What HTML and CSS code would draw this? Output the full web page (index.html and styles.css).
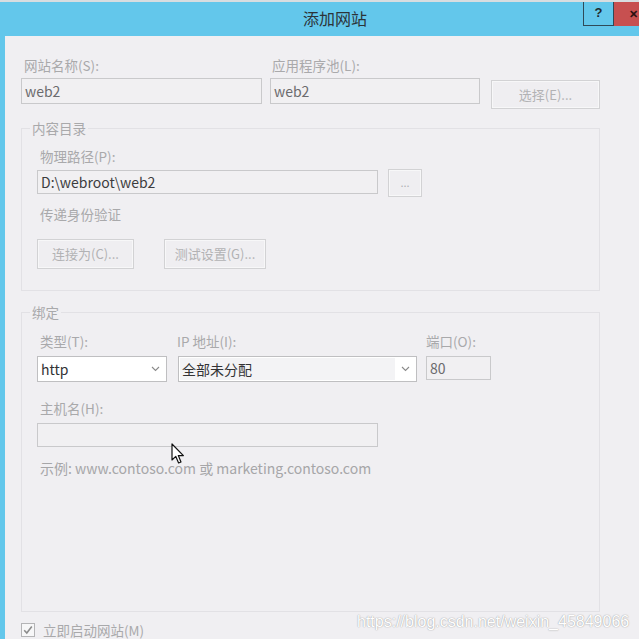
FILE: index.html
```html
<!DOCTYPE html>
<html lang="zh-CN">
<head>
<meta charset="utf-8">
<title>添加网站</title>
<link rel="stylesheet" href="styles.css">
</head>
<body>
<div class="window">
  <div class="titlebar">
    <div class="title">添加网站</div>
    <div class="tb-btn tb-help">?</div>
    <div class="tb-btn tb-close">✕</div>
  </div>
  <div class="panel">
    <div class="top-row">
      <div class="field f-name">
        <div class="lbl">网站名称(S):</div>
        <div class="input ro">web2</div>
      </div>
      <div class="field f-pool">
        <div class="lbl">应用程序池(L):</div>
        <div class="input ro">web2</div>
      </div>
      <div class="btn btn-select">选择(E)...</div>
    </div>

    <fieldset class="group g-content">
      <legend>内容目录</legend>
      <div class="lbl ind">物理路径(P):</div>
      <div class="path-row">
        <div class="input path">D:\webroot\web2</div>
        <div class="btn btn-browse">...</div>
      </div>
      <div class="lbl ind auth">传递身份验证</div>
      <div class="btn-row">
        <div class="btn btn-connect">连接为(C)...</div>
        <div class="btn btn-test">测试设置(G)...</div>
      </div>
    </fieldset>

    <fieldset class="group g-binding">
      <legend>绑定</legend>
      <div class="bind-row">
        <div class="col c-type">
          <div class="lbl ind">类型(T):</div>
          <div class="select">
            <span class="sel-text">http</span>
            <svg class="chev" width="9" height="6" viewBox="0 0 9 6"><path d="M1 1 L4.5 4.5 L8 1" fill="none" stroke="#8a8a8a" stroke-width="1.1"/></svg>
          </div>
        </div>
        <div class="col c-ip">
          <div class="lbl ip-lbl">IP 地址(I):</div>
          <div class="select">
            <span class="sel-text sel-fill">全部未分配</span>
            <svg class="chev" width="9" height="6" viewBox="0 0 9 6"><path d="M1 1 L4.5 4.5 L8 1" fill="none" stroke="#8a8a8a" stroke-width="1.1"/></svg>
          </div>
        </div>
        <div class="col c-port">
          <div class="lbl">端口(O):</div>
          <div class="input ro port">80</div>
        </div>
      </div>
      <div class="lbl ind host-lbl">主机名(H):</div>
      <div class="input ro host"></div>
      <div class="lbl ind example">示例: www.contoso.com 或 marketing.contoso.com</div>
    </fieldset>

    <div class="check-row">
      <span class="checkbox">
        <svg width="12" height="12" viewBox="0 0 12 12"><path d="M2.2 6.2 L4.8 9 L9.8 2.6" fill="none" stroke="#8c8c8c" stroke-width="1.6"/></svg>
      </span>
      <span class="check-lbl">立即启动网站(M)</span>
    </div>
  </div>

  <svg class="cursor" width="14" height="22" viewBox="0 0 14 22"><path d="M1 1 L1 17 L4.8 13.4 L7.6 20 L10 19 L7.3 12.6 L12.4 12.6 Z" fill="#ffffff" stroke="#111111" stroke-width="1.2" stroke-linejoin="round"/></svg>
  <div class="watermark">https://blog.csdn.net/weixin_45849066</div>
</div>
</body>
</html>
```

FILE: styles.css
```css
* { box-sizing: border-box; }

html, body {
  margin: 0;
  padding: 0;
  width: 639px;
  height: 639px;
  overflow: hidden;
  background: #63c7eb;
  font-family: "Noto Sans CJK SC", "Noto Sans", sans-serif;
}

.window {
  position: relative;
  width: 639px;
  height: 639px;
  display: flex;
  flex-direction: column;
}

.titlebar {
  height: 36px;
  flex: 0 0 36px;
  border-top: 2px solid #d8dde0;
  background: #63c7eb;
  display: flex;
  align-items: flex-start;
}

.title {
  flex: 1;
  padding-left: 87px;
  text-align: center;
  font-size: 16px;
  line-height: 32px;
  color: #2c3439;
}

.tb-btn {
  height: 24px;
  font-size: 13px;
  line-height: 22px;
  font-weight: bold;
  text-align: center;
}

.tb-help {
  width: 31px;
  border: 1px solid #2f4a58;
  border-top: none;
  color: #1e2a30;
  font-family: "Liberation Sans", sans-serif;
}

.tb-close {
  width: 25px;
  background: #c75050;
  color: #2a1010;
  font-size: 11px;
  text-align: right;
  padding-right: 1px;
}

.panel {
  flex: 1;
  margin-left: 5px;
  background: #f0eff2;
  padding: 21px 0 0 16px;
}

.lbl {
  font-size: 13.5px;
  line-height: 16px;
  color: #a9a9ab;
  white-space: nowrap;
}

.ind { margin-left: 3px; }

.top-row {
  display: flex;
  align-items: flex-start;
}

.field .lbl { margin-left: 3px; margin-bottom: 5px; }

.f-name { width: 241px; }
.f-pool { width: 210px; margin-left: 8px; }
.f-pool .lbl { margin-left: 2px; }

.input {
  height: 24px;
  border: 1px solid #c9c9cb;
  background: #f1f0f2;
  font-size: 14px;
  line-height: 22px;
  padding-left: 3px;
  color: #6b6b6d;
  white-space: nowrap;
}

.top-row .input { height: 26px; line-height: 24px; }

.btn {
  height: 30px;
  border: 1px solid #d2d2d4;
  background: #efeef1;
  box-shadow: inset 0 0 0 1px #f7f7f8;
  color: #b2b2b4;
  font-size: 13px;
  line-height: 28px;
  text-align: center;
  white-space: nowrap;
}

.btn-select {
  width: 109px;
  height: 29px;
  margin-left: 11px;
  margin-top: 23px;
  line-height: 27px;
}

.group {
  margin: 0;
  width: 579px;
  border: 1px solid #e2e1e5;
  min-width: 0;
}

.group legend {
  font-size: 13.5px;
  line-height: 16px;
  color: #a9a9ab;
  padding: 0 2px;
  margin-left: -7px;
}

.g-content {
  margin-top: 11px;
  padding: 12px 0 21px 15px;
}

.path-row {
  display: flex;
  align-items: flex-start;
  margin-top: 6px;
}

.path {
  width: 341px;
  color: #3c3c3e;
}

.btn-browse {
  width: 34px;
  height: 28px;
  margin-left: 10px;
  margin-top: -1px;
  line-height: 24px;
  font-size: 11px;
}

.auth { margin-top: 9px; }

.btn-row {
  display: flex;
  gap: 30px;
  margin-top: 17px;
}

.btn-connect { width: 97px; }
.btn-test { width: 102px; }

.g-binding {
  margin-top: 13px;
  height: 308px;
  padding: 13px 0 0 15px;
}

.bind-row {
  display: flex;
  align-items: flex-start;
}

.col .lbl { margin-bottom: 7px; }

.c-type { width: 130px; }
.c-ip { width: 239px; margin-left: 11px; }
.c-port { width: 65px; margin-left: 9px; }

.ip-lbl { margin-left: -1px; }

.select {
  height: 26px;
  border: 1px solid #bfbfc1;
  background: #ffffff;
  display: flex;
  align-items: center;
  padding: 1px;
}

.sel-text {
  flex: 1;
  height: 100%;
  font-size: 14px;
  line-height: 22px;
  padding-left: 2px;
  color: #333335;
}

.sel-fill {
  flex: 0 0 215px;
  background: #f3f3f5;
}

.chev {
  margin-left: auto;
  margin-right: 5px;
}

.port {
  width: 65px;
}

.host-lbl { margin-top: 18px; }

.host {
  width: 341px;
  margin-top: 7px;
}

.example {
  margin-top: 13px;
  font-size: 14px;
  color: #a6a6a8;
}

.check-row {
  display: flex;
  align-items: center;
  margin-top: 10px;
}

.checkbox {
  width: 14px;
  height: 14px;
  border: 1px solid #b4b4b6;
  background: #f7f7f8;
  display: flex;
  align-items: center;
  justify-content: center;
}

.check-lbl {
  margin-left: 8px;
  font-size: 13.5px;
  line-height: 16px;
  color: #a9a9ab;
}

.cursor {
  position: absolute;
  left: 171px;
  top: 443px;
}

.watermark {
  position: absolute;
  left: 357px;
  top: 612px;
  font-family: "Liberation Sans", sans-serif;
  font-size: 16px;
  line-height: 20px;
  color: #ffffff;
  text-shadow: 0 0 1px rgba(0, 0, 0, 0.35), 0 0 2px rgba(0, 0, 0, 0.15);
  white-space: nowrap;
}
```
